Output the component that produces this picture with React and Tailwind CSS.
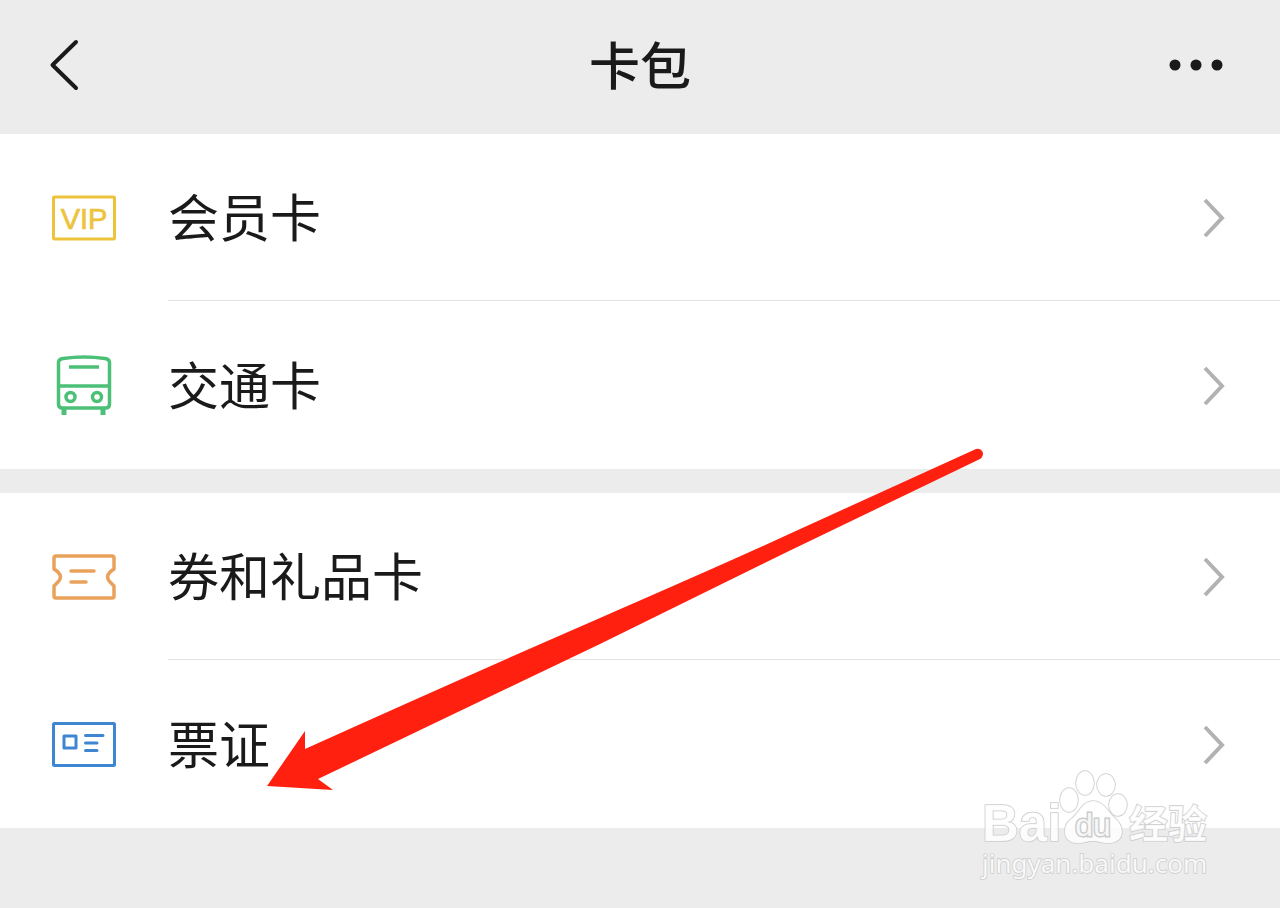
import { useState } from "react";

const GROUPS = [
  [
    { key: "member",  label: "会员卡", icon: VipIcon },
    { key: "transit", label: "交通卡", icon: BusIcon },
  ],
  [
    { key: "coupon",  label: "券和礼品卡", icon: TicketIcon },
    { key: "license", label: "票证", icon: IdIcon },
  ],
];

export default function CardWallet() {
  const [selected, setSelected] = useState(null);

  return (
    <div className="relative min-h-screen overflow-hidden bg-[#ececec] text-[#1a1a1a] font-['Noto_Sans_CJK_SC',sans-serif]">
      <header className="flex h-[134px] items-center justify-between px-12 pb-1">
        <button aria-label="返回" className="flex w-16">
          <svg viewBox="0 0 32 52" className="h-[52px] w-8" fill="none" stroke="currentColor" strokeWidth="4" strokeLinecap="round" strokeLinejoin="round">
            <path d="M28 3 4.5 26 28 49" />
          </svg>
        </button>
        <h1 className="pb-1 text-[51px] leading-none font-medium">卡包</h1>
        <button aria-label="更多" className="flex w-16">
          <svg viewBox="0 0 56 12" className="h-3 w-14" fill="currentColor">
            <circle cx="7" cy="6" r="5.5" />
            <circle cx="28" cy="6" r="5.5" />
            <circle cx="49" cy="6" r="5.5" />
          </svg>
        </button>
      </header>

      <main className="flex flex-col gap-6">
        {GROUPS.map((items, g) => (
          <ul key={g} className="bg-white">
            {items.map((item, i) => (
              <li key={item.key}>
                <button onClick={() => setSelected(item.key)} aria-pressed={selected === item.key}
                  className="flex w-full items-center text-left">
                  <span className="flex w-[168px] shrink-0 pl-[51px]"><item.icon /></span>
                  <span className={`flex flex-1 items-center justify-between pr-[54px] ${
                    i < items.length - 1 ? "h-[167px] border-b border-[#e2e2e2]" : "h-[168px]"
                  }`}>
                    <span className="pb-1 text-[51px] leading-none">{item.label}</span>
                    <Chevron />
                  </span>
                </button>
              </li>
            ))}
          </ul>
        ))}
      </main>

      <Arrow />
      <Watermark />
    </div>
  );
}

function Chevron() {
  return (
    <svg viewBox="0 0 24 42" className="h-[42px] w-6" fill="none" stroke="#b2b2b2" strokeWidth="4">
      <path d="M3 4 20 22 3 40" />
    </svg>
  );
}

function VipIcon() {
  return (
    <svg viewBox="0 0 66 66" className="size-[66px]">
      <rect x="2.5" y="12" width="61" height="42" rx="1" fill="none" stroke="#edc33c" strokeWidth="3" />
      <text x="33" y="44" textAnchor="middle" fill="#edc33c" stroke="#edc33c" strokeWidth=".7" className="font-['Liberation_Sans',sans-serif] text-[29px]">VIP</text>
    </svg>
  );
}

function BusIcon() {
  return (
    <svg viewBox="0 0 66 66" className="size-[66px]" fill="none" stroke="#4dc078" strokeWidth="3.5">
      <path d="M7.5 10Q8 7 12 6.5Q33 3.5 54 6.5Q58 7 58.5 10V52Q58.5 56 54.5 56H11.5Q7.5 56 7.5 52Z" />
      <path d="M7.5 34H58.5M18 15H48" />
      <circle cx="19.5" cy="45" r="4.5" />
      <circle cx="46" cy="45" r="4.5" />
      <path d="M13 56v7M52 56v7" strokeWidth="5" />
    </svg>
  );
}

function TicketIcon() {
  return (
    <svg viewBox="0 0 66 66" className="size-[66px]" fill="none" stroke="#e9a25b" strokeWidth="3.5" strokeLinejoin="round" strokeLinecap="round">
      <path d="M5 12H61Q63 12 63 14V25L59 28Q54 33 59 38L63 42V52Q63 54 61 54H5Q3 54 3 52V42L7 38Q12 33 7 28L3 25V14Q3 12 5 12Z" />
      <path d="M20 27H43M20 38H35" />
    </svg>
  );
}

function IdIcon() {
  return (
    <svg viewBox="0 0 66 66" className="size-[66px]" fill="none" stroke="#3f86d2" strokeWidth="3" strokeLinejoin="round" strokeLinecap="round">
      <rect x="2.5" y="12.5" width="61" height="42" rx="1" />
      <rect x="13" y="25" width="12" height="12" />
      <path d="M34.5 24.5H52M34.5 32H46M34.5 39.5H46" />
    </svg>
  );
}

// hand-drawn pointer lying over the list
function Arrow() {
  return (
    <svg viewBox="0 0 730 350" className="pointer-events-none absolute top-[445px] left-[260px] w-[730px]" fill="#ff2010">
      <path d="M7 341 45 286V304Q200 234 340 173T527 90L716 4Q721 3 723 8Q723 12 720 14L527 107 340 199 58 334 73 345Z" />
    </svg>
  );
}

function Watermark() {
  return (
    <svg viewBox="0 0 240 120" className="pointer-events-none absolute right-[62px] bottom-6 w-60" fill="#ffffff" fillOpacity=".85" stroke="#cccccc" strokeWidth="1.5" paintOrder="stroke">
      <text x="4" y="77" className="font-['Liberation_Sans',sans-serif] text-[51px] font-bold">Bai</text>
      <ellipse cx="91" cy="36" rx="9" ry="12" />
      <ellipse cx="107" cy="19" rx="9" ry="12" />
      <ellipse cx="128" cy="21" rx="9" ry="11" />
      <ellipse cx="140" cy="41" rx="9" ry="11" />
      <path d="M115 37C126 37 129 47 137 54C147 63 147 78 132 79C125 80 121 77 115 77C109 77 105 80 98 79C84 78 84 62 93 55C102 48 104 37 115 37Z" />
      <text x="115" y="72" textAnchor="middle" strokeWidth="3" className="font-['Liberation_Sans',sans-serif] text-[32px]">du</text>
      <text x="151" y="74" className="text-[39px] font-bold">经验</text>
      <text x="4" y="109" className="font-['Noto_Sans',sans-serif] text-[26px]">jingyan.baidu.com</text>
    </svg>
  );
}
